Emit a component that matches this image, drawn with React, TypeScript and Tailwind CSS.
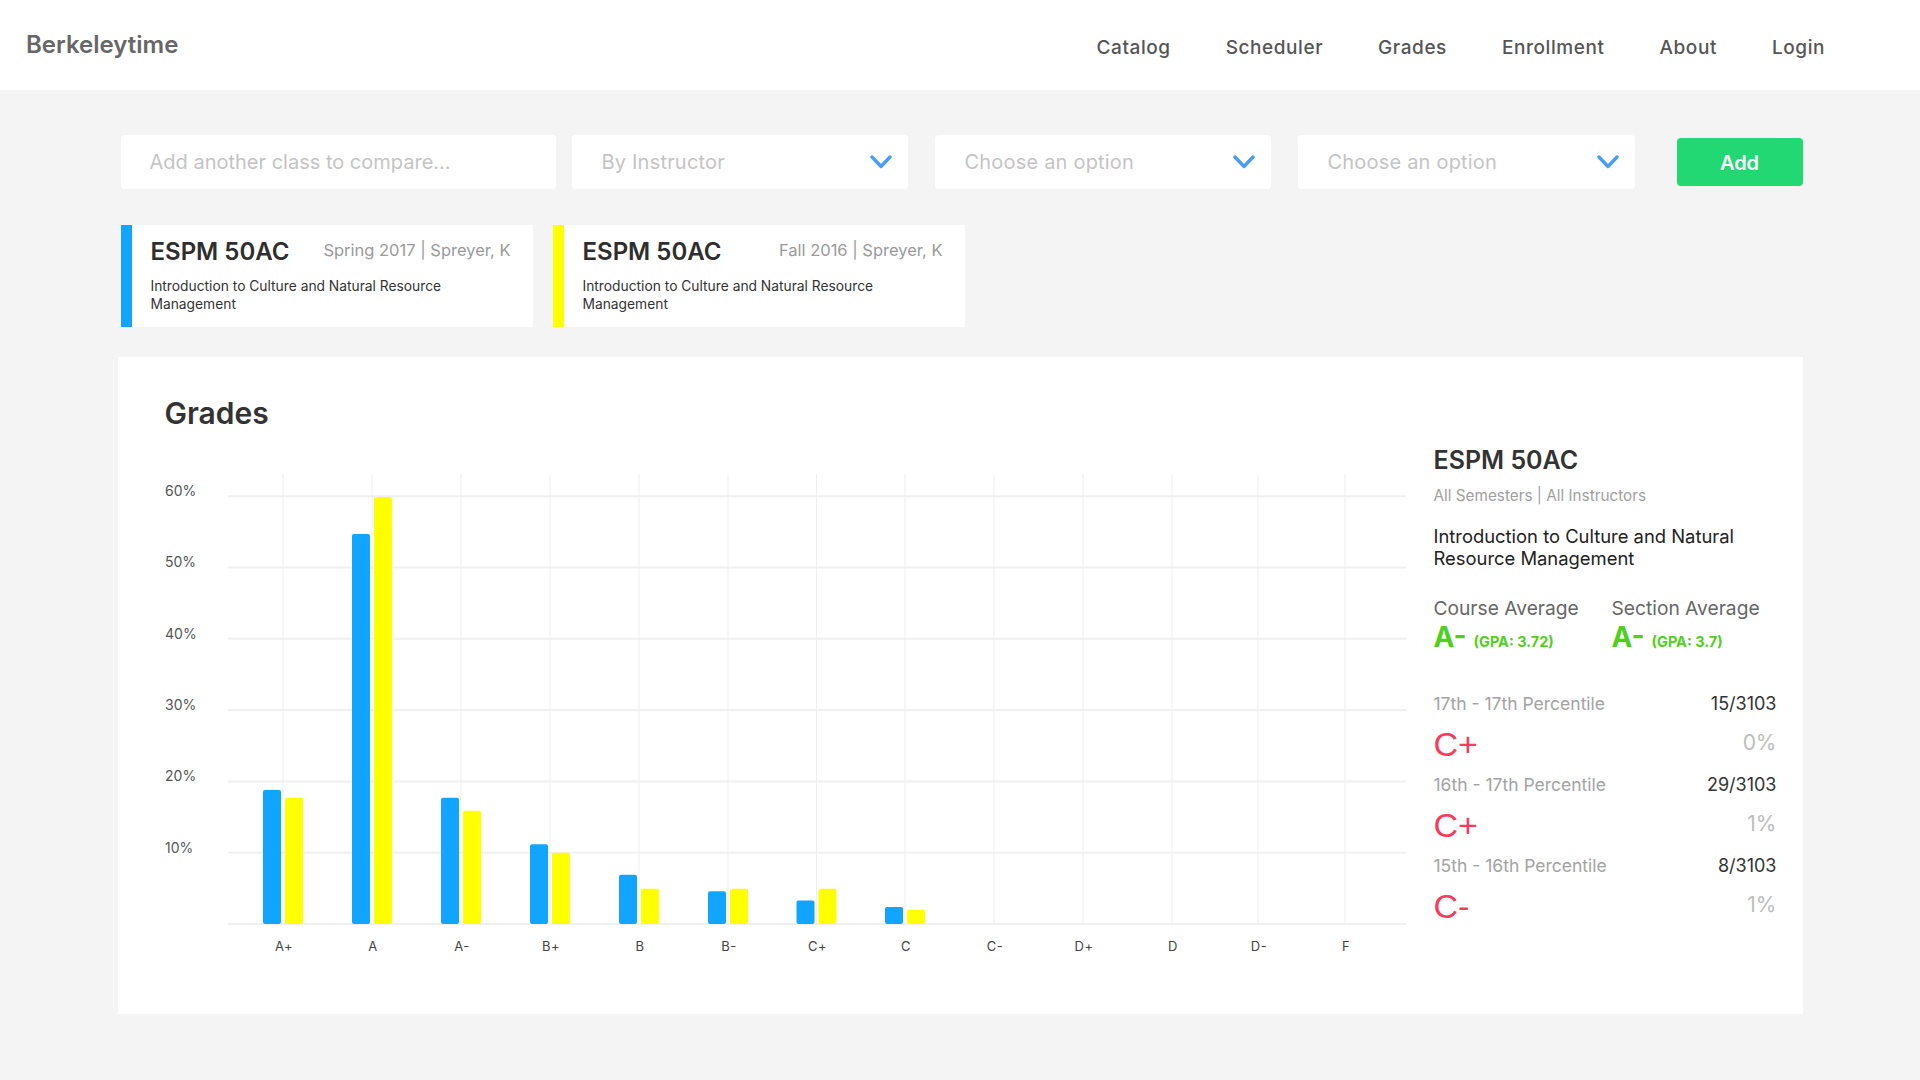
import React from "react";

const grades = ["A+", "A", "A-", "B+", "B", "B-", "C+", "C", "C-", "D+", "D", "D-", "F"];
const blueVals = [18.8, 54.7, 17.7, 11.2, 6.9, 4.6, 3.3, 2.4, 0, 0, 0, 0, 0];
const yellowVals = [17.7, 59.9, 15.9, 10, 4.95, 4.95, 4.95, 2.0, 0, 0, 0, 0, 0];
// column centres, measured from the svg's left edge
const centers = [118, 207, 296, 385, 474, 563, 651.5, 740, 829, 918, 1007, 1093, 1180];

const navItems = ["Catalog", "Scheduler", "Grades", "Enrollment", "About", "Login"];

function Chevron() {
    return (
        <svg width="22" height="14" viewBox="0 0 22 14" fill="none">
            <path d="M2 2 L11 11.5 L20 2" stroke="#4b9cf6" strokeWidth="3.4" strokeLinecap="round" strokeLinejoin="round" />
        </svg>
    );
}

function Select({ label, width }: { label: string; width: string }) {
    return (
        <div className={`${width} h-[54px] bg-white rounded-[4px] flex items-center justify-between pl-[30px] pr-[16px]`}>
            <span className="text-[20px] tracking-[0.01em] text-[#c4c4c4]">{label}</span>
            <Chevron />
        </div>
    );
}

function ClassCard({ color, meta }: { color: string; meta: string }) {
    return (
        <div className="w-[412px] h-[102px] bg-white flex">
            <div className={`w-[11px] h-full ${color}`} />
            <div className="flex-1 pl-[19px] pr-[22px] pt-[12px]">
                <div className="flex items-center justify-between">
                    <span className="text-[24px] leading-[29px] font-semibold text-[#2e2e2e]">ESPM 50AC</span>
                    <span className="text-[16.5px] leading-[20px] text-[#9a9a9a] -mt-[3px]">{meta}</span>
                </div>
                <p className="mt-[11px] text-[13.8px] leading-[18px] text-[#333] pr-[30px]">
                    Introduction to Culture and Natural Resource Management
                </p>
            </div>
        </div>
    );
}

function GradeChart() {
    const y0 = 454;
    const step = 71.3;
    const perPct = step / 10;
    return (
        <svg width="1250" height="492" className="block">
            {[0, 1, 2, 3, 4, 5, 6].map((k) => (
                <line key={"h" + k} x1="63" x2="1241" y1={y0 - k * step} y2={y0 - k * step} stroke="#f0f0f0" strokeWidth="2" />
            ))}
            {grades.map((g, i) => (
                <line key={"v" + g} x1={centers[i]} x2={centers[i]} y1="4" y2={y0} stroke="#efefef" strokeWidth="1" />
            ))}
            {[1, 2, 3, 4, 5, 6].map((k) => (
                <text key={"t" + k} x="0" y={y0 - k * step - 4} dominantBaseline="middle" fontSize="14" fill="#555">
                    {k * 10}%
                </text>
            ))}
            {grades.map((g, i) => {
                const cx = centers[i];
                const bh = blueVals[i] * perPct;
                const yh = yellowVals[i] * perPct;
                return (
                    <g key={"b" + g}>
                        {bh > 0 && <rect x={cx - 20} y={y0 - bh} width="18" height={bh} rx="2" fill="#12a5ff" />}
                        {yh > 0 && <rect x={cx + 2} y={y0 - yh} width="18" height={yh} rx="2" fill="#ffff00" />}
                        <text x={cx + 1} y="477" textAnchor="middle" dominantBaseline="middle" fontSize="13" letterSpacing="0.5" fill="#444">
                            {g}
                        </text>
                    </g>
                );
            })}
        </svg>
    );
}

function PercentileRow({ range, count, grade, pct }: { range: string; count: string; grade: string; pct: string }) {
    return (
        <div className="mb-[11px]">
            <div className="flex justify-between items-center leading-[24px]">
                <span className="text-[17.5px] text-[#a3a3a3]">{range}</span>
                <span className="text-[18px] text-[#333]">{count}</span>
            </div>
            <div className="mt-[10px] flex justify-between items-center h-[36px]">
                <span className="text-[34px] leading-[36px] text-[#f83a5c] font-['Liberation_Sans',sans-serif]">{grade}</span>
                <span className="text-[21px] text-[#bdbdbd] -mt-[2px]">{pct}</span>
            </div>
        </div>
    );
}

export default function App() {
    return (
        <div className="min-h-screen bg-[#f4f4f4] font-['Inter',sans-serif]">
            <header className="h-[90px] bg-white flex items-center justify-between pl-[26px] pr-[95px]">
                <span className="text-[24px] font-semibold text-[#676767]">Berkeleytime</span>
                <nav className="flex gap-[55px] mt-[6px]">
                    {navItems.map((n) => (
                        <span key={n} className="text-[19px] tracking-[0.03em] font-medium text-[#555]">
                            {n}
                        </span>
                    ))}
                </nav>
            </header>

            <main className="w-[1685px] mx-auto pt-[45px]">
                <div className="flex items-center pl-[3px] h-[54px]">
                    <div className="w-[435px] h-[54px] bg-white rounded-[4px] flex items-center pl-[29px]">
                        <span className="text-[20px] text-[#c4c4c4]">Add another class to compare…</span>
                    </div>
                    <div className="ml-[16px]">
                        <Select label="By Instructor" width="w-[336px]" />
                    </div>
                    <div className="ml-[27px]">
                        <Select label="Choose an option" width="w-[336px]" />
                    </div>
                    <div className="ml-[27px]">
                        <Select label="Choose an option" width="w-[337px]" />
                    </div>
                    <button className="ml-[42px] w-[126px] h-[48px] rounded-[4px] bg-[#21d872] text-white text-[20px] font-semibold pt-[2px]">
                        Add
                    </button>
                </div>

                <div className="flex gap-[20px] pl-[3px] mt-[36px]">
                    <ClassCard color="bg-[#12a5ff]" meta="Spring 2017 | Spreyer, K" />
                    <ClassCard color="bg-[#ffff00]" meta="Fall 2016 | Spreyer, K" />
                </div>

                <section className="mt-[30px] bg-white h-[657px] flex pl-[47px] pr-[26px]">
                    <div className="w-[1250px]">
                        <h2 className="mt-[38px] text-[30px] leading-[36px] font-semibold text-[#333]">Grades</h2>
                        <div className="mt-[39px]">
                            <GradeChart />
                        </div>
                    </div>
                    <div className="ml-[19px] w-[343px] pt-[87px]">
                        <h3 className="text-[25px] leading-[32px] font-semibold text-[#333]">ESPM 50AC</h3>
                        <p className="mt-[10px] text-[15.3px] leading-[20px] text-[#a0a0a0]">All Semesters | All Instructors</p>
                        <p className="mt-[19px] text-[18.4px] leading-[22px] text-[#222]">
                            Introduction to Culture and Natural Resource Management
                        </p>
                        <div className="mt-[26px] flex">
                            <div className="w-[178px]">
                                <div className="text-[19.2px] leading-[26px] text-[#666]">Course Average</div>
                                <div className="flex items-baseline gap-[7px] leading-[30px] mt-[1px]">
                                    <span className="text-[28px] font-bold text-[#4fd11b]">A-</span>
                                    <span className="text-[14.5px] font-bold text-[#4fd11b]">(GPA: 3.72)</span>
                                </div>
                            </div>
                            <div>
                                <div className="text-[19.2px] leading-[26px] text-[#666]">Section Average</div>
                                <div className="flex items-baseline gap-[7px] leading-[30px] mt-[1px]">
                                    <span className="text-[28px] font-bold text-[#4fd11b]">A-</span>
                                    <span className="text-[14.5px] font-bold text-[#4fd11b]">(GPA: 3.7)</span>
                                </div>
                            </div>
                        </div>
                        <div className="mt-[35px]">
                            <PercentileRow range="17th - 17th Percentile" count="15/3103" grade="C+" pct="0%" />
                            <PercentileRow range="16th - 17th Percentile" count="29/3103" grade="C+" pct="1%" />
                            <PercentileRow range="15th - 16th Percentile" count="8/3103" grade="C-" pct="1%" />
                        </div>
                    </div>
                </section>
            </main>
        </div>
    );
}
